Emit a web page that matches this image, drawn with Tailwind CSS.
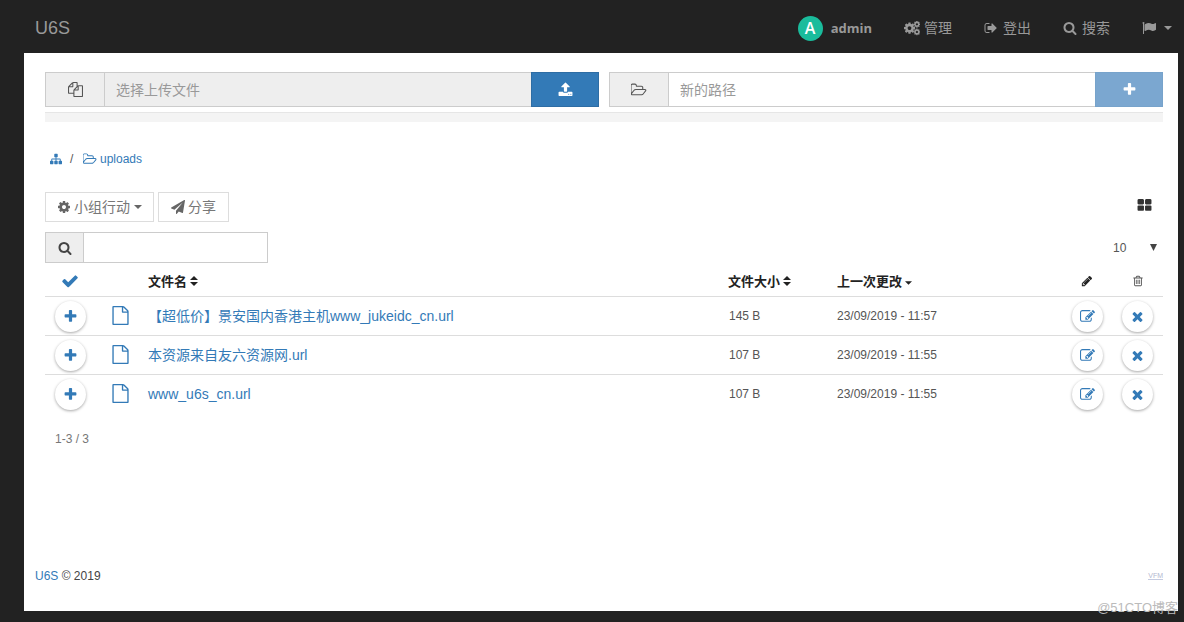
<!DOCTYPE html>
<html lang="zh-CN">
<head>
<meta charset="utf-8">
<meta name="viewport" content="width=device-width, initial-scale=1">
<title>U6S</title>
<script src="https://cdn.jsdelivr.net/npm/@tailwindcss/browser@4"></script>
</head>
<body class="flex min-h-screen flex-col bg-[#222] font-['Liberation_Sans','Noto_Sans_CJK_SC',sans-serif] text-xs text-[#555]">
<svg class="hidden">
  <symbol id="plus" viewBox="0 0 1792 1792"><path d="M1600 736v192q0 40-28 68t-68 28h-416v416q0 40-28 68t-68 28h-192q-40 0-68-28t-28-68v-416h-416q-40 0-68-28t-28-68v-192q0-40 28-68t68-28h416v-416q0-40 28-68t68-28h192q40 0 68 28t28 68v416h416q40 0 68 28t28 68z"/></symbol>
  <symbol id="times" viewBox="0 0 1792 1792"><path d="M1490 1322q0 40-28 68l-136 136q-28 28-68 28t-68-28l-294-294-294 294q-28 28-68 28t-68-28l-136-136q-28-28-28-68t28-68l294-294-294-294q-28-28-28-68t28-68l136-136q28-28 68-28t68 28l294 294 294-294q28-28 68-28t68 28l136 136q28 28 28 68t-28 68l-294 294 294 294q28 28 28 68z"/></symbol>
  <symbol id="search" viewBox="0 0 1792 1792"><path d="M1216 832q0-185-131.5-316.5t-316.5-131.5-316.5 131.5-131.5 316.5 131.5 316.5 316.5 131.5 316.5-131.5 131.5-316.5zm512 832q0 52-38 90t-90 38q-54 0-90-38l-343-342q-179 124-399 124-143 0-273.5-55.5t-225-150-150-225-55.5-273.5 55.5-273.5 150-225 225-150 273.5-55.5 273.5 55.5 225 150 150 225 55.5 273.5q0 220-124 399l343 343q37 37 37 90z"/></symbol>
  <symbol id="check" viewBox="0 0 1792 1792"><path d="M1671 566q0 40-28 68l-724 724-136 136q-28 28-68 28t-68-28l-136-136-362-362q-28-28-28-68t28-68l136-136q28-28 68-28t68 28l294 295 656-657q28-28 68-28t68 28l136 136q28 28 28 68z"/></symbol>
  <symbol id="cog" viewBox="0 0 1792 1792"><path d="M1152 896q0-106-75-181t-181-75-181 75-75 181 75 181 181 75 181-75 75-181zm512-109v222q0 12-8 23t-20 13l-185 28q-19 54-39 91 35 50 107 138 10 12 10 25t-9 23q-27 37-99 108t-94 71q-12 0-26-9l-138-108q-44 23-91 38-16 136-29 186-7 28-36 28h-222q-14 0-24.5-8.5t-11.5-21.5l-28-184q-49-16-90-37l-141 107q-10 9-25 9-14 0-25-11-126-114-165-168-7-10-7-23 0-12 8-23 15-21 51-66.5t54-70.5q-27-50-41-99l-183-27q-13-2-21-12.5t-8-23.5v-222q0-12 8-23t19-13l186-28q14-46 39-92-40-57-107-138-10-12-10-24 0-10 9-23 26-36 98.5-107.5t94.5-71.5q13 0 26 10l138 107q44-23 91-38 16-136 29-186 7-28 36-28h222q14 0 24.5 8.5t11.5 21.5l28 184q49 16 90 37l142-107q9-9 24-9 13 0 25 10 129 119 165 170 7 8 7 22 0 12-8 23-15 21-51 66.5t-54 70.5q26 50 41 98l183 28q13 2 21 12.5t8 23.5z"/></symbol>
  <symbol id="cogs" viewBox="0 0 1920 1792"><use href="#cog" x="-120" y="130" width="1560" height="1560"/><use href="#cog" x="1080" y="-20" width="940" height="940"/><use href="#cog" x="1080" y="900" width="940" height="940"/></symbol>
  <symbol id="plane" viewBox="0 0 1792 1792"><path d="M1764 11q33 24 27 64l-256 1536q-5 29-32 45-14 8-31 8-11 0-24-5l-453-185-242 295q-18 23-49 23-13 0-22-4-19-7-30.5-23.5t-11.5-36.5v-349l864-1059-1069 925-395-162q-37-14-40-55-2-40 32-59l1664-960q15-9 32-9 20 0 36 11z"/></symbol>
  <symbol id="grid" viewBox="0 0 1792 1792"><path d="M832 1024v384q0 52-38 90t-90 38h-512q-52 0-90-38t-38-90v-384q0-52 38-90t90-38h512q52 0 90 38t38 90zm0-768v384q0 52-38 90t-90 38h-512q-52 0-90-38t-38-90v-384q0-52 38-90t90-38h512q52 0 90 38t38 90zm896 768v384q0 52-38 90t-90 38h-512q-52 0-90-38t-38-90v-384q0-52 38-90t90-38h512q52 0 90 38t38 90zm0-768v384q0 52-38 90t-90 38h-512q-52 0-90-38t-38-90v-384q0-52 38-90t90-38h512q52 0 90 38t38 90z"/></symbol>
  <symbol id="edit" viewBox="0 0 1792 1792"><path d="M888 1184l116-116-152-152-116 116v56h96v96h56zm440-720q-16-16-33 1l-350 350q-17 17-1 33t33-1l350-350q17-17 1-33zm80 594v190q0 119-84.500 203.500t-203.500 84.500h-832q-119 0-203.500-84.500t-84.500-203.500v-832q0-119 84.500-203.500t203.500-84.500h832q63 0 117 25 15 7 18 23 3 17-9 29l-49 49q-14 14-32 8-23-6-45-6h-832q-66 0-113 47t-47 113v832q0 66 47 113t113 47h832q66 0 113-47t47-113v-126q0-13 9-22l64-64q15-15 35-7t20 29zm-96-738l288 288-672 672h-288v-288zm444 132l-92 92-288-288 92-92q28-28 68-28t68 28l152 152q28 28 28 68t-28 68z"/></symbol>
  <symbol id="pencil" viewBox="0 0 1792 1792"><path d="M491 1536l91-91-235-235-91 91v107h128v128h107zm523-928q0-22-22-22-10 0-17 7l-542 542q-7 7-7 17 0 22 22 22 10 0 17-7l542-542q7-7 7-17zm-54-192l416 416-832 832h-416v-416zm683 96q0 53-37 90l-166 166-416-416 166-165q36-38 90-38 53 0 91 38l235 234q37 39 37 91z"/></symbol>
  <symbol id="trash" viewBox="0 0 1792 1792"><path d="M704 736v576q0 14-9 23t-23 9h-64q-14 0-23-9t-9-23v-576q0-14 9-23t23-9h64q14 0 23 9t9 23zm256 0v576q0 14-9 23t-23 9h-64q-14 0-23-9t-9-23v-576q0-14 9-23t23-9h64q14 0 23 9t9 23zm256 0v576q0 14-9 23t-23 9h-64q-14 0-23-9t-9-23v-576q0-14 9-23t23-9h64q14 0 23 9t9 23zm128 724v-948h-896v948q0 22 7 40.500t14.500 27 10.500 8.500h832q3 0 10.500-8.500t14.500-27 7-40.500zm-672-1076h448l-48-117q-7-9-17-11h-317q-10 2-17 11zm928 32v64q0 14-9 23t-23 9h-96v948q0 83-47 143.500t-113 60.500h-832q-66 0-113-58.500t-47-141.500v-952h-96q-14 0-23-9t-9-23v-64q0-14 9-23t23-9h309l70-167q15-37 54-63t79-26h320q40 0 79 26t54 63l70 167h309q14 0 23 9t9 23z"/></symbol>
  <symbol id="flag" viewBox="0 0 1792 1792"><path d="M320 256q0 72-64 110v1266q0 13-9.500 22.500t-22.500 9.500h-64q-13 0-22.500-9.500t-9.500-22.500v-1266q-64-38-64-110 0-53 37.500-90.500t90.500-37.500 90.500 37.500 37.500 90.500zm1472 64v763q0 25-12.500 38.500t-39.500 27.500q-215 116-369 116-61 0-123.500-22t-108.500-48-115.500-48-142.500-22q-192 0-464 146-17 9-33 9-26 0-45-19t-19-45v-742q0-32 31-55 21-14 79-43 236-120 421-120 107 0 200 29t219 88q38 19 88 19 54 0 117.500-21t110-47 88-47 54.500-21q26 0 45 19t19 45z"/></symbol>
  <symbol id="signout" viewBox="0 0 1792 1792"><path d="M704 1440q0 4 1 20t.5 26.500-3 23.500-10 19.500-20.500 6.500h-320q-119 0-203.500-84.500t-84.500-203.500v-704q0-119 84.500-203.500t203.500-84.500h320q13 0 22.500 9.500t9.500 22.500q0 4 1 20t.5 26.500-3 23.500-10 19.500-20.500 6.500h-320q-66 0-113 47t-47 113v704q0 66 47 113t113 47h312l11.500 1 11.500 3 8 5.500 7 9 2 13.500zm928-544q0 26-19 45l-544 544q-19 19-45 19t-45-19-19-45v-288h-448q-26 0-45-19t-19-45v-384q0-26 19-45t45-19h448v-288q0-26 19-45t45-19 45 19l544 544q19 19 19 45z"/></symbol>
  <symbol id="upload" viewBox="0 0 1792 1792"><path d="M1344 1472q0-26-19-45t-45-19-45 19-19 45 19 45 45 19 45-19 19-45zm256 0q0-26-19-45t-45-19-45 19-19 45 19 45 45 19 45-19 19-45zm128-224v320q0 40-28 68t-68 28h-1472q-40 0-68-28t-28-68v-320q0-40 28-68t68-28h427q21 56 70.500 92t110.500 36h256q61 0 110.500-36t70.500-92h427q40 0 68 28t28 68zm-325-648q-17 40-59 40h-256v448q0 26-19 45t-45 19h-256q-26 0-45-19t-19-45v-448h-256q-42 0-59-40-17-39 14-69l448-448q18-19 45-19t45 19l448 448q31 30 14 69z"/></symbol>
  <symbol id="folder" viewBox="0 0 1920 1792"><path d="M1717 931q0-35-53-35h-1088q-40 0-85.500 21.500t-71.500 52.500l-294 363q-18 24-18 40 0 35 53 35h1088q40 0 86-22t71-53l294-363q18-22 18-39zm-1141-163h768v-160q0-40-28-68t-68-28h-576q-40 0-68-28t-28-68v-64q0-40-28-68t-68-28h-320q-40 0-68 28t-28 68v853l256-315q44-53 116-87.500t140-34.500zm1269 163q0 62-46 120l-295 363q-43 53-116 87.500t-140 34.500h-1088q-92 0-158-66t-66-158v-960q0-92 66-158t158-66h320q92 0 158 66t66 158v32h544q92 0 158 66t66 158v160h192q54 0 99 24.500t67 70.500q15 32 15 68z"/></symbol>
  <symbol id="files" viewBox="0 0 1792 1792"><path d="M1696 384q40 0 68 28t28 68v1216q0 40-28 68t-68 28h-960q-40 0-68-28t-28-68v-288h-544q-40 0-68-28t-28-68v-672q0-40 20-88t48-76l408-408q28-28 76-48t88-20h416q40 0 68 28t28 68v328q68-40 128-40h416zm-544 213l-299 299h299v-299zm-640-384l-299 299h299v-299zm196 647l316-316v-416h-384v416q0 40-28 68t-68 28h-416v640h512v-256q0-40 20-88t48-76zm956 804v-1152h-384v416q0 40-28 68t-68 28h-416v640h896z"/></symbol>
  <symbol id="sitemap" viewBox="0 0 1792 1792"><path d="M1792 1248v320q0 40-28 68t-68 28h-320q-40 0-68-28t-28-68v-320q0-40 28-68t68-28h96v-192h-512v192h96q40 0 68 28t28 68v320q0 40-28 68t-68 28h-320q-40 0-68-28t-28-68v-320q0-40 28-68t68-28h96v-192h-512v192h96q40 0 68 28t28 68v320q0 40-28 68t-68 28h-320q-40 0-68-28t-28-68v-320q0-40 28-68t68-28h96v-192q0-52 38-90t90-38h512v-192h-96q-40 0-68-28t-28-68v-320q0-40 28-68t68-28h320q40 0 68 28t28 68v320q0 40-28 68t-68 28h-96v192h512q52 0 90 38t38 90v192h96q40 0 68 28t28 68z"/></symbol>
  <symbol id="file" viewBox="0 0 1792 1792"><path d="M1596 380q28 28 48 76t20 88v1152q0 40-28 68t-68 28h-1344q-40 0-68-28t-28-68v-1600q0-40 28-68t68-28h896q40 0 88 20t76 48zm-444-244v376h376q-10-29-22-41l-313-313q-12-12-41-22zm384 1528v-1024h-416q-40 0-68-28t-28-68v-416h-768v1536h1280z"/></symbol>
  <symbol id="sort" viewBox="0 0 8 12"><path d="M4 1l4 4H0zM4 11L0 7h8z"/></symbol>
  <symbol id="caret" viewBox="0 0 8 4"><path d="M0 0h8L4 4z"/></symbol>
</svg>

<nav class="flex h-[53px] items-center justify-between pt-[3px] pr-3 pl-[35px] text-sm text-[#999]">
  <a href="#" class="text-lg">U6S</a>
  <div class="flex items-center gap-8">
    <a href="#" class="flex items-center gap-2 font-['Open_Sans',sans-serif] text-[13px] font-bold">
      <span class="flex size-[25px] items-center justify-center rounded-full bg-[#1abc9c] text-base font-semibold text-white">A</span>admin</a>
    <a href="#" class="flex items-center gap-1"><svg class="size-[16px] fill-current"><use href="#cogs"/></svg>管理</a>
    <a href="#" class="flex items-center gap-[5px]"><svg class="size-[14px] fill-current"><use href="#signout"/></svg>登出</a>
    <a href="#" class="flex items-center gap-[5px]"><svg class="size-[14px] fill-current"><use href="#search"/></svg>搜索</a>
    <button aria-label="语言" class="flex items-center gap-2"><svg class="size-[14px] fill-current"><use href="#flag"/></svg><svg class="h-1 w-2 fill-current"><use href="#caret"/></svg></button>
  </div>
</nav>

<div class="relative mr-[6px] mb-[11px] ml-6 flex grow flex-col bg-white">
  <main class="grow pt-[19px] pr-[15px] pl-[21px]">
    <div class="grid grid-cols-2 gap-[10px]">
      <form class="flex h-[35px]">
        <label for="up" class="flex w-[60px] items-center justify-center border border-[#ccc] bg-[#eee]"><svg class="size-[15px] fill-[#555]"><use href="#files"/></svg></label>
        <input id="up" readonly placeholder="选择上传文件" class="min-w-0 grow border-y border-[#ccc] bg-[#eee] px-[11px] text-sm placeholder:text-[#999]">
        <button type="button" aria-label="上传" class="flex w-[68px] items-center justify-center border border-[#2e6da4] bg-[#337ab7]"><svg class="size-[15px] fill-white"><use href="#upload"/></svg></button>
      </form>
      <form class="flex h-[35px]">
        <label for="dir" class="flex w-[60px] items-center justify-center border border-[#ccc] bg-[#eee]"><svg class="size-4 fill-[#555]"><use href="#folder"/></svg></label>
        <input id="dir" placeholder="新的路径" class="min-w-0 grow border-y border-[#ccc] bg-white px-[11px] text-sm placeholder:text-[#999]">
        <button type="button" aria-label="新建" class="flex w-[68px] items-center justify-center border border-[#77a3cb] bg-[#7ba7d0]"><svg class="size-[15px] fill-white"><use href="#plus"/></svg></button>
      </form>
    </div>
    <div class="mt-[5px] h-[10px] border-t border-[#e6e6e6] bg-[#f4f4f4]"></div>

    <div class="mt-[29px] flex h-4 items-center pl-[5px] text-[#337ab7]">
      <a href="#" aria-label="根目录"><svg class="size-3 fill-current"><use href="#sitemap"/></svg></a>
      <span class="ml-2 w-[13px] text-[#555]">/</span>
      <a href="#" class="flex items-center gap-[3px]"><svg class="size-[14px] fill-current"><use href="#folder"/></svg>uploads</a>
    </div>

    <div class="mt-[25px] flex items-start justify-between pr-[11px]">
      <div class="flex gap-1 text-sm text-[#777]">
        <button class="flex h-[30px] items-center border border-[#ddd] px-[11px]"><svg class="mr-[3px] size-[14px] fill-[#666]"><use href="#cog"/></svg>小组行动<svg class="ml-1 h-1 w-2 fill-[#666]"><use href="#caret"/></svg></button>
        <button class="flex h-[30px] items-center gap-[3px] border border-[#ddd] px-3"><svg class="size-[14px] fill-[#666]"><use href="#plane"/></svg>分享</button>
      </div>
      <button aria-label="网格视图" class="pt-[6px]"><svg class="size-[15px] fill-[#333]"><use href="#grid"/></svg></button>
    </div>

    <div class="mt-[10px] flex items-center justify-between">
      <div class="flex h-[31px] w-[223px]">
        <label for="q" class="flex w-[39px] items-center justify-center border border-[#ccc] bg-[#eee]"><svg class="size-[14px] fill-[#444]"><use href="#search"/></svg></label>
        <input id="q" aria-label="搜索" class="min-w-0 grow border border-l-0 border-[#ccc] px-2">
      </div>
      <div class="relative w-[50px]">
        <select aria-label="每页数量" class="w-full appearance-none bg-transparent text-[#555]"><option>10</option><option>25</option></select>
        <svg class="pointer-events-none absolute top-1 right-[6px] size-[7px] fill-[#444]" viewBox="0 0 7 7"><path d="M0 0h7L3.500 7z"/></svg>
      </div>
    </div>

    <table class="w-full table-fixed border-collapse text-left">
      <colgroup><col class="w-[50px]"><col class="w-[50px]"><col><col class="w-[109px]"><col class="w-[228px]"><col class="w-[50px]"><col class="w-[51px]"></colgroup>
      <thead class="text-[13px] text-[#222]">
        <tr class="h-[33px] border-b border-[#ddd]">
          <th><button aria-label="全选" class="mx-auto mt-1 block"><svg class="size-[18px] fill-[#337ab7]"><use href="#check"/></svg></button></th>
          <th></th>
          <th class="px-[3px] pt-1"><button class="flex items-center gap-[3px]">文件名<svg class="h-3 w-2 fill-current"><use href="#sort"/></svg></button></th>
          <th class="px-[3px] pt-1"><button class="flex items-center gap-[3px]">文件大小<svg class="h-3 w-2 fill-current"><use href="#sort"/></svg></button></th>
          <th class="px-[3px] pt-1"><button class="flex items-center gap-[3px]">上一次更改<svg class="mt-1 h-1 w-[7px] fill-current"><use href="#caret"/></svg></button></th>
          <th class="pt-1"><svg aria-label="编辑" class="mx-auto size-3 fill-current"><use href="#pencil"/></svg></th>
          <th class="pt-1"><svg aria-label="删除" class="mx-auto size-3 fill-[#555]"><use href="#trash"/></svg></th>
        </tr>
      </thead>
      <tbody>
        <tr class="h-[39px] border-b border-[#ddd]">
          <td><button aria-label="选择" class="mx-auto mt-px flex size-[31px] items-center justify-center rounded-full bg-white shadow-[0_1px_3px_rgba(0,0,0,0.35)]"><svg class="size-[15px] fill-[#337ab7]"><use href="#plus"/></svg></button></td>
          <td><svg class="mx-auto size-[19px] fill-[#337ab7]"><use href="#file"/></svg></td>
          <td class="px-[3px]"><a href="#" class="text-sm text-[#337ab7]">【超低价】景安国内香港主机www_jukeidc_cn.url</a></td>
          <td class="px-1">145 B</td>
          <td class="px-[3px]">23/09/2019 - 11:57</td>
          <td><button aria-label="编辑" class="mx-auto mt-px flex size-[31px] items-center justify-center rounded-full bg-white shadow-[0_1px_3px_rgba(0,0,0,0.35)]"><svg class="size-[15px] fill-[#337ab7]"><use href="#edit"/></svg></button></td>
          <td><button aria-label="删除" class="mx-auto mt-px flex size-[31px] items-center justify-center rounded-full bg-white shadow-[0_1px_3px_rgba(0,0,0,0.35)]"><svg class="size-[15px] fill-[#337ab7]"><use href="#times"/></svg></button></td>
        </tr>
        <tr class="h-[39px] border-b border-[#ddd]">
          <td><button aria-label="选择" class="mx-auto mt-px flex size-[31px] items-center justify-center rounded-full bg-white shadow-[0_1px_3px_rgba(0,0,0,0.35)]"><svg class="size-[15px] fill-[#337ab7]"><use href="#plus"/></svg></button></td>
          <td><svg class="mx-auto size-[19px] fill-[#337ab7]"><use href="#file"/></svg></td>
          <td class="px-[3px]"><a href="#" class="text-sm text-[#337ab7]">本资源来自友六资源网.url</a></td>
          <td class="px-1">107 B</td>
          <td class="px-[3px]">23/09/2019 - 11:55</td>
          <td><button aria-label="编辑" class="mx-auto mt-px flex size-[31px] items-center justify-center rounded-full bg-white shadow-[0_1px_3px_rgba(0,0,0,0.35)]"><svg class="size-[15px] fill-[#337ab7]"><use href="#edit"/></svg></button></td>
          <td><button aria-label="删除" class="mx-auto mt-px flex size-[31px] items-center justify-center rounded-full bg-white shadow-[0_1px_3px_rgba(0,0,0,0.35)]"><svg class="size-[15px] fill-[#337ab7]"><use href="#times"/></svg></button></td>
        </tr>
        <tr class="h-[39px]">
          <td><button aria-label="选择" class="mx-auto mt-px flex size-[31px] items-center justify-center rounded-full bg-white shadow-[0_1px_3px_rgba(0,0,0,0.35)]"><svg class="size-[15px] fill-[#337ab7]"><use href="#plus"/></svg></button></td>
          <td><svg class="mx-auto size-[19px] fill-[#337ab7]"><use href="#file"/></svg></td>
          <td class="px-[3px]"><a href="#" class="text-sm text-[#337ab7]">www_u6s_cn.url</a></td>
          <td class="px-1">107 B</td>
          <td class="px-[3px]">23/09/2019 - 11:55</td>
          <td><button aria-label="编辑" class="mx-auto mt-px flex size-[31px] items-center justify-center rounded-full bg-white shadow-[0_1px_3px_rgba(0,0,0,0.35)]"><svg class="size-[15px] fill-[#337ab7]"><use href="#edit"/></svg></button></td>
          <td><button aria-label="删除" class="mx-auto mt-px flex size-[31px] items-center justify-center rounded-full bg-white shadow-[0_1px_3px_rgba(0,0,0,0.35)]"><svg class="size-[15px] fill-[#337ab7]"><use href="#times"/></svg></button></td>
        </tr>
      </tbody>
    </table>
    <p class="mt-[18px] pl-[10px] text-[#777]">1-3 / 3</p>
  </main>
  <footer class="flex items-center justify-between pr-[15px] pb-[27px] pl-[11px] text-[#444]">
    <p><a href="#" class="text-[#337ab7]">U6S</a> © 2019</p>
    <a href="#" class="border-b border-[#c5cbe0] text-[7px] leading-[7px] text-[#b4b8d0]">VFM</a>
  </footer>
  <span class="absolute right-0 -bottom-[5px] text-[13px] text-[#bbb]">@51CTO博客</span>
</div>
</body>
</html>
